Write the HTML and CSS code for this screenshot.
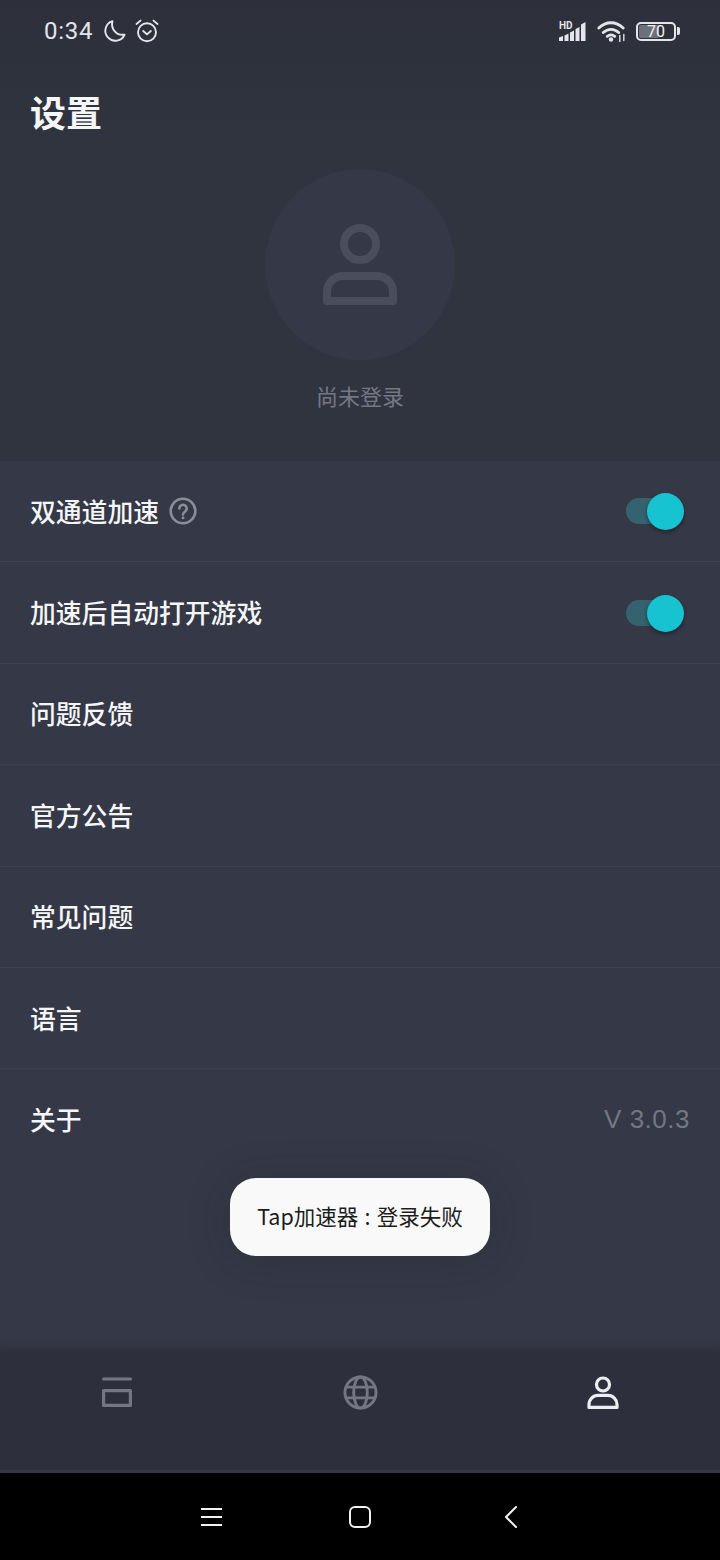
FILE: index.html
```html
<!DOCTYPE html>
<html>
<head>
    <meta charset="UTF-8">
    <meta name="viewport" content="width=device-width, initial-scale=1.0">
    <title>设置</title>
    <link rel="stylesheet" href="styles.css">
</head>
<body>
    <div class="app">
        <div class="top">
            <div class="status">
                <div class="status-left">
                    <span class="time">0:34</span>
                    <svg class="moon" width="24" height="24" viewBox="0 0 24 24"><path d="M10.500 2.200A10 10 0 1 0 22.600 15.600 10.600 10.600 0 0 1 10.500 2.200Z" fill="none" stroke="#e3e5ea" stroke-width="1.900" stroke-linejoin="round"/></svg>
                    <svg class="alarm" width="24" height="24" viewBox="0 0 24 24" fill="none" stroke="#e3e5ea" stroke-width="1.900" stroke-linecap="round" stroke-linejoin="round"><circle cx="12" cy="13.200" r="9"/><path d="M1.500 5 5.500 1.600M22.500 5 18.500 1.600M8.200 12l3.800 3.400L15.800 12"/></svg>
                </div>
                <div class="status-right">
                    <svg class="signal" width="27" height="20" viewBox="0 0 27 20" fill="#e3e5ea"><text x="0" y="7.500" class="hd">HD</text><path d="M0 16.500 4 15v5H0zM5.500 14.500 9.500 12.500V20h-4zM11 11.500 15 9.500V20h-4zM16.500 8 20.500 6V20h-4zM22 3.500 26.500 1V20H22z"/></svg>
                    <svg class="wifi" width="29" height="22" viewBox="0 0 29 22" fill="none" stroke="#e3e5ea" stroke-width="2.800" stroke-linecap="round"><path d="M1.800 8c7.200-7 17.200-7 24.400 0M6.300 12.500c4.600-4.200 10.800-4.200 15.400 0M10.300 16.300c2.400-1.900 5-1.900 7.400 0"/><circle cx="14" cy="19.500" r="2.200" fill="#e3e5ea" stroke="none"/><path d="M22.800 15.500v6M26.800 14.500v6" stroke-width="1.400"/></svg>
                    <div class="battery">
                        <div class="battery-body"><div class="battery-fill"></div><span class="battery-num">70</span></div>
                        <div class="battery-cap"></div>
                    </div>
                </div>
            </div>
            <h1 class="title">设置</h1>
            <div class="avatar">
                <svg width="76" height="82" viewBox="0 0 76 82" fill="none" stroke="#494d5c" stroke-width="8"><circle cx="38" cy="20" r="16"/><path d="M5 77V68a16 16 0 0 1 16-16h34a16 16 0 0 1 16 16v9Z" stroke-linejoin="round"/></svg>
            </div>
            <div class="login-text">尚未登录</div>
        </div>

        <div class="list">
            <div class="row">
                <div class="row-label">双通道加速
                    <svg class="help" width="28" height="28" viewBox="0 0 28 28" fill="none" stroke="#8b8e98" stroke-width="2.600"><circle cx="14" cy="14" r="12.300"/><path d="M10.300 11.500a3.700 3.700 0 1 1 5.800 3c-1.400 1-2.100 1.500-2.100 3" stroke-linecap="round"/><circle cx="14" cy="20.800" r="1.500" fill="#8b8e98" stroke="none"/></svg>
                </div>
                <div class="switch"><div class="knob"></div></div>
            </div>
            <div class="row">
                <div class="row-label">加速后自动打开游戏</div>
                <div class="switch"><div class="knob"></div></div>
            </div>
            <div class="row"><div class="row-label">问题反馈</div></div>
            <div class="row"><div class="row-label">官方公告</div></div>
            <div class="row"><div class="row-label">常见问题</div></div>
            <div class="row"><div class="row-label">语言</div></div>
            <div class="row row-last">
                <div class="row-label">关于</div>
                <div class="version">V 3.0.3</div>
            </div>
        </div>

        <div class="spacer"></div>

        <div class="nav">
            <svg width="30" height="30" viewBox="0 0 30 30" fill="none" stroke="#747783" stroke-width="3.200" stroke-linejoin="round"><path d="M1.600 2h26.800" stroke-linecap="round"/><rect x="1.600" y="13.600" width="26.800" height="14.800"/></svg>
            <svg width="35" height="35" viewBox="0 0 36 36" fill="none" stroke="#747783" stroke-width="3"><circle cx="18" cy="18" r="16"/><ellipse cx="18" cy="18" rx="7" ry="16"/><path d="M3 12.500h30M3 23.500h30"/></svg>
            <svg width="32" height="33" viewBox="0 0 32 33" fill="none" stroke="#eceef1" stroke-width="3.200"><circle cx="16" cy="8.500" r="6.500"/><path d="M2 31.400v-3a9 9 0 0 1 9-9h10a9 9 0 0 1 9 9v3Z" stroke-linejoin="round"/></svg>
        </div>
        <div class="nav-edge"></div>

        <div class="sysbar">
            <svg width="21" height="20" viewBox="0 0 21 20" stroke="#f2f2f2" stroke-width="2"><path d="M0 2h21M0 10h21M0 18h21"/></svg>
            <svg class="sys-home" width="22" height="22" viewBox="0 0 22 22" fill="none" stroke="#f2f2f2" stroke-width="2"><rect x="1" y="1" width="20" height="20" rx="5"/></svg>
            <svg class="sys-back" width="12" height="22" viewBox="0 0 12 22" fill="none" stroke="#f2f2f2" stroke-width="2" stroke-linecap="round"><path d="M11 1 1 11l10 10"/></svg>
        </div>

        <div class="toast">Tap加速器 : 登录失败</div>
    </div>
</body>
</html>
```

FILE: styles.css
```css
html, body {
    margin: 0;
    padding: 0;
}
body {
    background-color: #000;
    font-family: "Noto Sans CJK SC", "Noto Sans", sans-serif;
}
.app {
    position: relative;
    width: 720px;
    height: 1560px;
    display: flex;
    flex-direction: column;
    background-color: #353846;
    overflow: hidden;
}

/* top part */
.top {
    height: 461px;
    background: linear-gradient(#2d303b, #30343f 150px);
    flex-shrink: 0;
}
.status {
    height: 32px;
    padding: 15px 40px 0 44px;
    display: flex;
    justify-content: space-between;
    align-items: center;
}
.status-left {
    display: flex;
    align-items: center;
}
.time {
    font-family: Roboto, sans-serif;
    font-size: 24px;
    letter-spacing: 0.7px;
    color: #e3e5ea;
    margin-right: 9px;
}
.moon {
    margin-right: 9px;
}
.status-right {
    display: flex;
    align-items: center;
}
.wifi {
    margin-left: 11px;
    margin-right: 10px;
}
.hd {
    font-family: Roboto, sans-serif;
    font-size: 10px;
    font-weight: 700;
}
.battery {
    display: flex;
    align-items: center;
}
.battery-body {
    position: relative;
    width: 36px;
    height: 15px;
    border: 2.500px solid #e3e5ea;
    border-radius: 5px;
    display: flex;
    align-items: center;
    justify-content: center;
}
.battery-fill {
    position: absolute;
    left: 1px;
    top: 1px;
    bottom: 1px;
    width: 20px;
    background-color: #6d7079;
    border-radius: 2px;
}
.battery-num {
    position: relative;
    font-family: Roboto, sans-serif;
    font-size: 16px;
    color: #f0f1f3;
}
.battery-cap {
    width: 3px;
    height: 8px;
    margin-left: 1px;
    background-color: #e3e5ea;
    border-radius: 0 2px 2px 0;
}
.title {
    margin: 37px 0 0;
    padding: 0 0 0 30px;
    height: 60px;
    line-height: 54px;
    font-size: 36px;
    font-weight: 700;
    color: #f5f6f7;
}
.avatar {
    width: 190px;
    height: 191px;
    margin: 25px auto 0;
    border-radius: 50%;
    background-color: #353846;
    display: flex;
    align-items: center;
    justify-content: center;
}
.login-text {
    margin-top: 17px;
    text-align: center;
    font-size: 22px;
    line-height: 36px;
    color: #747885;
}

/* settings rows */
.list {
    flex-shrink: 0;
}
.row {
    height: 100.400px;
    border-bottom: 1px solid #3d404e;
    padding: 0 30px;
    display: flex;
    align-items: center;
    justify-content: space-between;
}
.row-last {
    border-bottom: none;
}
.row-label {
    display: flex;
    align-items: center;
    padding-bottom: 2px;
    font-size: 25.800px;
    font-weight: 500;
    color: #f5f6f7;
}
.help {
    margin-left: 10px;
    margin-top: 1px;
}
.switch {
    position: relative;
    width: 56px;
    height: 26px;
    margin-right: 8px;
    border-radius: 13px;
    background-color: #34636f;
}
.knob {
    position: absolute;
    right: -2px;
    top: -5px;
    width: 37px;
    height: 37px;
    border-radius: 50%;
    background-color: #17c3d0;
    box-shadow: 0 2px 4px rgba(0, 0, 0, 0.4);
}
.version {
    font-family: "Liberation Sans", Arial, sans-serif;
    font-size: 26px;
    letter-spacing: 0.5px;
    color: #737783;
}

.spacer {
    flex: 1;
}

/* bottom nav */
.nav {
    height: 80px;
    padding-bottom: 38px;
    flex-shrink: 0;
    background-color: #2d303c;
    box-shadow: 0 -4px 8px rgba(30, 32, 40, 0.35);
    display: grid;
    grid-template-columns: 234px 252px 234px;
    justify-items: center;
    align-items: center;
}
.nav-edge {
    height: 3px;
    flex-shrink: 0;
    background-color: #353846;
}
.sysbar {
    height: 87px;
    padding-left: 201px;
    flex-shrink: 0;
    background-color: #000;
    display: flex;
    align-items: center;
}
.sys-home {
    margin-left: 127px;
}
.sys-back {
    margin-left: 134px;
}

.toast {
    position: absolute;
    left: 230px;
    top: 1178px;
    width: 260px;
    height: 78px;
    padding-bottom: 4px;
    box-sizing: border-box;
    border-radius: 26px;
    background-color: #f9f9fa;
    box-shadow: 0 4px 40px rgba(30, 32, 40, 0.25);
    display: flex;
    align-items: center;
    justify-content: center;
    font-size: 21.500px;
    word-spacing: 1.500px;
    color: #1c1c1c;
}
```
